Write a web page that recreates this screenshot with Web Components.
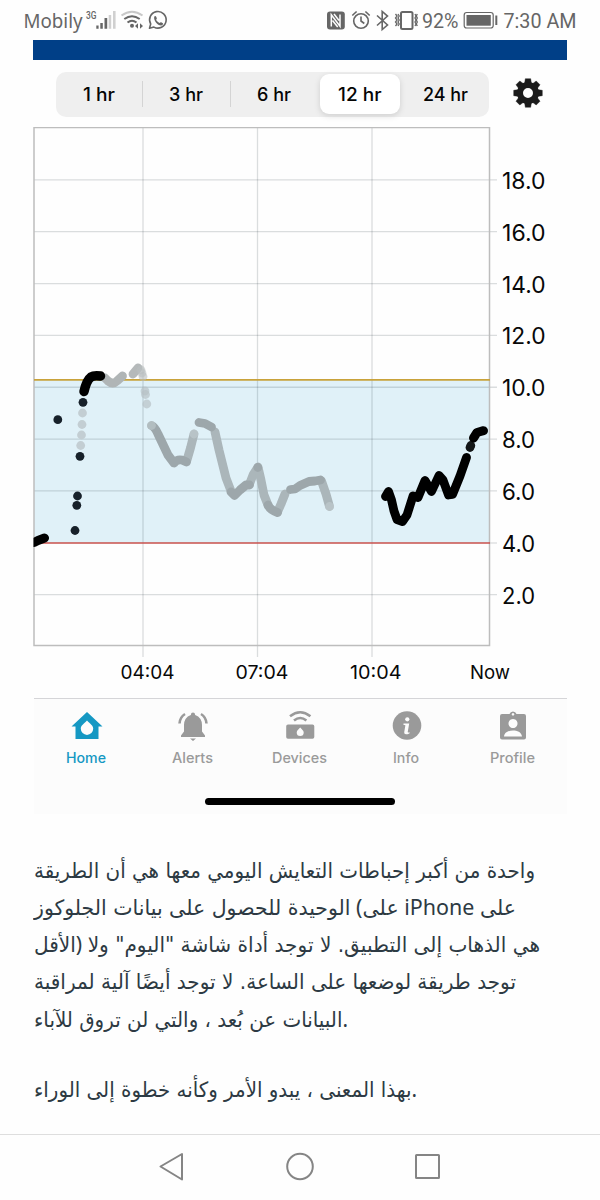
<!DOCTYPE html>
<html lang="ar" dir="ltr">
<head>
<meta charset="utf-8">
<title>Glucose</title>
<style>
html,body{margin:0;background:#fefefe}
body{width:600px;height:1200px;overflow:hidden;font-family:Inter,"Liberation Sans",sans-serif}
</style>
</head>
<body>
<phone-screen>
  <status-bar slot="status"></status-bar>
  <range-picker></range-picker>
  <glucose-chart></glucose-chart>
  <tab-bar></tab-bar>
  <article-text slot="article"></article-text>
  <nav-buttons slot="nav"></nav-buttons>
</phone-screen>
<script>
const define = (name, html, after) => customElements.define(name, class extends HTMLElement {
  connectedCallback() {
    if (this.shadowRoot) return;
    this.attachShadow({mode:'open'}).innerHTML = html;
    if (after) after(this.shadowRoot, this);
  }
});

/* A single line of text stretched to the width given in the w attribute */
define('fit-text', `<style>:host{display:block;white-space:nowrap}span{display:inline-block;transform-origin:0 50%}</style><span><slot></slot></span>`, (root, el) => {
  const s = root.querySelector('span'), w = +el.getAttribute('w');
  el.style.width = w + 'px';
  const n = s.getBoundingClientRect().width;
  if (n) s.style.transform = `scaleX(${w / n})`;
});

define('phone-screen', `<style>
:host{display:flex;flex-direction:column;width:600px;height:1200px;background:#fefefe}
.band{height:20px;margin:0 33.5px 0 33px;background:#003f87}
.app{height:754px;display:flex;flex-direction:column}
.article{flex:1}
</style><slot name="status"></slot><div class="band"></div><div class="app"><slot></slot></div><div class="article"><slot name="article"></slot></div><slot name="nav"></slot>`);

define('status-bar', `<style>
:host{display:block;height:40px}svg{display:block}text{font-family:Roboto,sans-serif;fill:#666}
</style>
<svg width="600" height="40" fill="none" stroke="#666" stroke-width="1.6">
<g stroke="none">
<text x="23.5" y="27.5" font-size="20.5" textLength="59" lengthAdjust="spacingAndGlyphs" style="font-family:'Noto Sans'">Mobily</text>
<text x="86" y="18.5" font-size="10" font-weight="500" textLength="10.5" lengthAdjust="spacingAndGlyphs">3G</text>
<text x="422" y="27.8" font-size="20" textLength="36.5" lengthAdjust="spacingAndGlyphs">92%</text>
<text x="503.500" y="27.800" font-size="20" textLength="73" lengthAdjust="spacingAndGlyphs">7:30 AM</text>
<path fill="#666" d="M96.300 25.500h2.300v3.300h-2.300zM100.300 23h2.500v5.800h-2.500zM104.500 18h2.700v10.800h-2.700z"/>
<path fill="#d0d0d0" d="M108.700 15h2.500v13.800h-2.500zM113 11h2.600v17.800h-2.600z"/>
<circle cx="132" cy="25.800" r="2" fill="#666"/>
<path fill="#666" d="M135 26l3-2.800v5.600zM143 26l-3-2.800v5.600z"/>
</g>
<path stroke="#c8c8c8" stroke-width="2" d="M121.500 15.500Q132 8 142.500 15.500"/>
<path stroke-width="2" d="M124.300 19Q132 13.500 139.700 19M127.500 22.500Q132 19 136.500 22.500"/>
<path d="M149.500 28.300l1.200-4.300a8.300 8.300 0 1 1 3.200 3.100z" stroke-linejoin="round"/>
<path d="M154.300 16.500c.800-1 1.500-.700 1.900.300l.600 1.400c.200.500-.2 1-.7 1.500 1 1.700 2.200 2.600 3.600 3.200.700-.8 1-.9 1.500-.600l1.700.9c.6.400-.2 2-1.500 2.300-3.200.500-8.400-4.800-7.100-9z" fill="#666" stroke="none"/>
<rect x="327" y="11.500" width="17.800" height="18" rx="3" fill="#666" stroke="none"/>
<path d="M331.300 26.500V14.800L340 26.200V14.500M334 14l5 6.500M332.500 20.500l5.200 6.500" stroke="#fefefe" stroke-width="1.500"/>
<circle cx="361" cy="21" r="7.300"/><path d="M361 16.500V21l3.300 2.500M352.300 15.500l4.300-4M369.700 15.500l-4.300-4"/>
<path d="M377 15.500l10.500 9.500-5.300 4.500V11.500l5.300 4.600L377 25.500"/>
<rect x="401" y="12" width="11.500" height="17" rx="1.500" stroke-width="2"/>
<path d="M395.500 14l1.600 2-1.600 2 1.600 2-1.600 2 1.600 2-1.600 2M398 14l1.200 2-1.200 2 1.200 2-1.200 2 1.200 2-1.200 2M415 14l1 2-1 2 1 2-1 2 1 2-1 2M417.300 14l-1 2 1 2-1 2 1 2-1 2 1 2" stroke-width="1.300"/>
<rect x="464.200" y="12.500" width="29" height="15.500" rx="2.500" stroke-width="1.200"/><rect x="466.500" y="15" width="24.300" height="10.700" fill="#666" stroke="none"/><path d="M496.300 15.500v9.500" stroke-width="2"/>
</svg>`);

define('range-picker', `<style>
:host{display:flex;height:67px;box-sizing:border-box;padding:11.500px 0 0 56px;align-items:flex-start}
.seg{display:flex;width:433px;height:45px;background:#efefef;border-radius:10px;box-sizing:border-box;padding:2.500px 0}
.opt{flex:1;display:flex;align-items:center;justify-content:center;font:500 18px Inter,sans-serif;color:#050505}
.opt:not(.on){font-weight:450}
.div{width:1px;height:26px;margin-top:7px;background:#d4d4d4}
.on{background:#fff;border-radius:9px;box-shadow:0 2px 6px #0002;margin:0 3px}
svg{margin:6.500px 0 0 24px}
</style>
<div class="seg"><div class="opt"><fit-text w="32">1 hr</fit-text></div><i class="div"></i><div class="opt"><fit-text w="34">3 hr</fit-text></div><i class="div"></i><div class="opt"><fit-text w="34">6 hr</fit-text></div><div class="opt on" style="flex:0 0 80px"><fit-text w="43.500">12 hr</fit-text></div><div class="opt"><fit-text w="45">24 hr</fit-text></div></div>
<svg width="30" height="30" viewBox="-15 -15 30 30"></svg>`, root => {
  let s = '';
  for (let a = 0; a < 360; a += 45) s += `<path transform="rotate(${a})" d="M-3.500-9L-2.700-14.300H2.700L3.500-9z"/>`;
  root.querySelector('svg').innerHTML = `<g fill="#1b1b1b" stroke="#1b1b1b" stroke-width=".4" stroke-linejoin="round">${s}</g><circle r="8" fill="none" stroke="#1b1b1b" stroke-width="6"/>`;
});

/* Coordinates inside the chart are screen units; the viewBox starts at the chart's top */
define('glucose-chart', `<style>:host{display:block;height:571px}svg{display:block}text{font-family:Inter,sans-serif;fill:#080808}</style>
<svg width="600" height="571" viewBox="0 127 600 571"></svg>`, root => {
  let s = '<rect x="34" y="380" width="455.500" height="163" fill="#e0f1f8"/><g stroke="#00141e" stroke-opacity=".14" stroke-width="1.300">';
  for (let i = 1; i <= 9; i++) if (i !== 2) {
    const y = 646.500 - i * 51.850; s += `<path d="M34 ${y}H497"/>`;
  }
  s += '<path d="M490 543H497"/>';
  for (const x of [143, 257.500, 372]) s += `<path d="M${x} 128V657"/>`;
  s += '</g><rect x="34" y="127.500" width="455.500" height="518" fill="none" stroke="#bdbdbd" stroke-width="1.500"/><path d="M34 379.800H490" stroke="#c9a23a" stroke-width="1.700"/><path d="M34 543H490" stroke="#c9504d" stroke-width="1.700"/>';
  for (let i = 1; i <= 9; i++) s += `<text x="502" y="${655.500 - i * 51.850}" font-size="23" textLength="${i > 4 ? 43.500 : 33}" lengthAdjust="spacingAndGlyphs">${i * 2}.0</text>`;
  [['04:04', 120.500, 54], ['07:04', 235.500, 53], ['10:04', 350, 51.500], ['Now', 470, 40]].forEach(t => s += `<text x="${t[1]}" y="679.300" font-size="19" textLength="${t[2]}" lengthAdjust="spacingAndGlyphs">${t[0]}</text>`);
  const line = (d, c, w = 8.800) => `<path d="${d}" fill="none" stroke="${c}" stroke-width="${w}" stroke-linecap="round" stroke-linejoin="round"/>`;
  const dots = (a, c) => a.map(p => `<circle cx="${p[0]}" cy="${p[1]}" r="4.400" fill="${c}"/>`).join('');
  const dark = '#9da7ab', mid = '#abb6ba', pale = '#c2cdd1';
  s += '<clipPath id="plot"><rect x="33.500" y="127" width="457" height="519"/></clipPath><g clip-path="url(#plot)">';
  s += line('M34 542.500L38 540.500L44.500 538', '#000', 9);
  s += dots([[57.800,419.700],[83,402.300],[80,456.300],[77.500,496],[76.800,505.300],[75,530.500]], '#17212a');
  s += dots([[82.500,413],[82,424.500],[81.500,435],[80.700,445.500]], '#c3ced3');
  s += line('M105 378L108 381Q113 385 117 381L122.500 376', '#b0b5b6');
  s += line('M133 374L138 368', '#b5b9ba') + dots([[141,370],[142,373],[143,376.500]], '#b9bebf99');
  s += dots([[145,391],[145.500,394.500],[146.800,404]], '#b7c1c5b0');
  s += line('M84 391.500C85.500 385 87 380 91 377Q94 375 100.500 376', '#000', 9.500);
  s += line('M187 460L190.500 448L194 434', mid) + line('M151.500 425.500Q155 427 158 434L168 455L174 463Q177 459 182 460L186.500 462', dark);
  s += line('M215 432L219 450L226 478L231 491', mid) + line('M199 422.500L205 423.500L211.500 427', dark);
  s += line('M249.500 484L253 475L257.500 468', mid) + line('M231 492L234.500 495.500L240 490L246 485L249.500 485', dark);
  s += line('M258 467L261 480L264 495L268 505', mid) + dots([[257.800,467.500]], dark) + line('M277.500 512L281 504L285 494', mid) + line('M268 505Q270 510 277.500 512.500', dark);
  s += line('M321.500 481L326 494L329.500 506.500', mid) + line('M290.500 489.500L295 489L300 485.500L309 481.500L315 481L320.500 480', dark);
  s += dots([[151.500,425.500],[194,434],[329.500,506.500]], pale + '90');
  s += line('M385.500 496.500L388.500 491.500L391.500 500L394 511L397 519.500L402.500 521.500L407 515L413 496L418 497.500L425 480.500L431.500 491.500L439 475.500L443 480L448.500 495L452.500 494.500L460 476L466.500 457.500', '#000');
  s += dots([[470,447.500],[470.800,445.500]], '#141718') + line('M473.500 438L477 432.500L483.500 430.700', '#000', 9);
  root.querySelector('svg').innerHTML = s + '</g>';
});

define('tab-bar', `<style>
:host{display:block;height:116px;margin:0 33.500px;border-top:1px solid #d5d5d8;box-sizing:border-box;background:#fcfcfc}
.tabs{display:grid;grid-template-columns:repeat(5,1fr);height:68px;color:#9a9a9a}
.tab{display:flex;flex-direction:column;align-items:center;padding-top:11px;font:500 14px Inter,sans-serif}
.tab:first-child{color:#1598c3}.tab fit-text{margin:7px 1px 0 0;line-height:17px}
svg{width:32px;height:32px;display:block;fill:currentColor}
.bar{width:190px;height:7px;border-radius:4px;background:#000;margin:31px auto 0}
.l{fill:none;stroke:currentColor;stroke-width:2.600}
</style><div class="tabs">
<div class="tab"><svg viewBox="0 0 32 32"><path fill-rule="evenodd" d="M16 2L.5 16.500H4.500V29H27.500V16.500H31.500zM16 10.500C12.800 14 9.800 15.500 9.800 18.700a6.200 6.200 0 0 0 12.400 0C22.200 15.500 19.200 14 16 10.500z"/></svg><fit-text w="40">Home</fit-text></div>
<div class="tab"><svg viewBox="0 0 32 32"><path d="M16 2.500q2 0 2.200 2.400Q25 7.500 25 15v6.500l3 4V27H4v-1.500l3-4V15q0-7.500 6.800-10.100Q14 2.500 16 2.500zM13 28.500h6l-3 2.500z"/><path class="l" d="M2.500 13.500Q3 7 8 4M29.500 13.500Q29 7 24 4"/></svg><fit-text w="41">Alerts</fit-text></div>
<div class="tab"><svg viewBox="0 0 32 32"><path fill-rule="evenodd" d="M4 14.500H28.500a1.800 1.800 0 0 1 1.800 1.800V27a1.800 1.800 0 0 1-1.800 1.800H4A1.800 1.800 0 0 1 2.200 27V16.300A1.800 1.800 0 0 1 4 14.500zM16.200 17.500c-1.500 2-3.500 2.800-3.500 5a3.500 3.500 0 0 0 7 0c0-2.200-2-3-3.500-5z"/><path class="l" d="M6 6.300Q16.200-1.800 26.400 6.300M10 10.500Q16.200 5.500 22.400 10.500"/></svg><fit-text w="55">Devices</fit-text></div>
<div class="tab"><svg viewBox="0 0 32 32"><circle cx="16" cy="15.500" r="14.300"/><g fill="#fcfcfc"><circle cx="16.300" cy="9.300" r="2.100"/><path d="M12.500 13.500h5.700l-1.500 8.500q0 .8 2 .2l-.3 1.300q-5.500 2.200-5.200-1.200l1.200-7-2-.5z"/></g></svg><fit-text w="26">Info</fit-text></div>
<div class="tab"><svg viewBox="0 0 32 32"><path fill-rule="evenodd" d="M5 4H12.500a3.700 3.700 0 0 1 7 0H27a2 2 0 0 1 2 2V27.500a2 2 0 0 1-2 2H5a2 2 0 0 1-2-2V6a2 2 0 0 1 2-2zM16 3a1.300 1.300 0 1 0 .01 0zM16 9a4.500 4.500 0 1 0 .01 0zM7 26.500H25C24.500 22 20 20.500 16 20.500S7.500 22 7 26.500z"/></svg><fit-text w="45">Profile</fit-text></div>
</div><div class="bar"></div>`);

define('article-text', `<style>
:host{display:block;padding:36.500px 0 0 34px;color:#2d3a43;font:22px "Noto Sans",sans-serif}
bdi{font-family:"DejaVu Sans",sans-serif;font-size:21px}
fit-text{height:37.300px;line-height:37.300px}.gap{margin-top:33px}
</style>
<fit-text w="501"><bdi dir="rtl">واحدة من أكبر إحباطات التعايش اليومي معها هي أن الطريقة</bdi></fit-text>
<fit-text w="482"><bdi dir="rtl">الوحيدة للحصول على بيانات الجلوكوز</bdi> (<bdi dir="rtl">على</bdi> iPhone <bdi dir="rtl">على</bdi></fit-text>
<fit-text w="506"><bdi dir="rtl">الأقل</bdi>) <bdi dir="rtl">هي الذهاب إلى التطبيق. لا توجد أداة شاشة "اليوم" ولا</bdi></fit-text>
<fit-text w="482"><bdi dir="rtl">توجد طريقة لوضعها على الساعة. لا توجد أيضًا آلية لمراقبة</bdi></fit-text>
<fit-text w="314"><bdi dir="rtl">البيانات عن بُعد ، والتي لن تروق للآباء</bdi>.</fit-text>
<fit-text class="gap" w="383"><bdi dir="rtl">بهذا المعنى ، يبدو الأمر وكأنه خطوة إلى الوراء</bdi>.</fit-text>`);

define('nav-buttons', `<style>:host{display:block;height:66px;border-top:1.500px solid #dedede;box-sizing:border-box}svg{display:block}</style>
<svg width="600" height="64" viewBox="0 1135 600 64" fill="none" stroke="#858585" stroke-width="2" stroke-linejoin="round"><path d="M160.500 1166.500L182 1154V1179.500z"/><circle cx="300" cy="1166.500" r="12.800"/><rect x="416" y="1155" width="23" height="23" rx=".5"/></svg>`);
</script>
</body>
</html>
